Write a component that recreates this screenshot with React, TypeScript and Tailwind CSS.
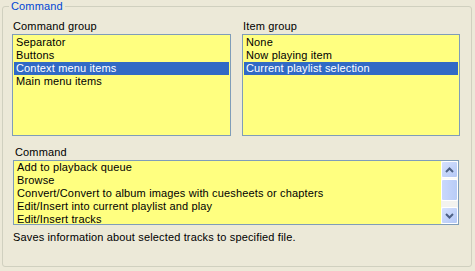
import React from "react";

const font = { fontFamily: '"Liberation Sans", Arial, sans-serif' };

function ListBox({ items, selected, className }: { items: string[]; selected?: number; className: string }) {
  return (
    <div className={`border border-[#7F9DB9] bg-[#FFFF80] p-[1px] overflow-hidden ${className}`}>
      {items.map((t, i) => (
        <div
          key={t}
          className={`h-[13px] leading-[13px] pl-[2px] whitespace-nowrap ${i === selected ? "bg-[#316AC5] text-white" : "text-black"}`}
        >
          {t}
        </div>
      ))}
    </div>
  );
}

function ScrollBtn({ up }: { up: boolean }) {
  return (
    <div className="w-[17px] h-[17px] rounded-[2px] border border-white bg-gradient-to-br from-[#D5E1FD] to-[#B4C8F6] flex items-center justify-center">
      <svg width="9" height="6" viewBox="0 0 9 6">
        <path d={up ? "M1 5 L4.5 1.5 L8 5" : "M1 1 L4.5 4.5 L8 1"} stroke="#4D6185" strokeWidth="2" fill="none" />
      </svg>
    </div>
  );
}

export default function App() {
  const cmds = [
    "Add to playback queue",
    "Browse",
    "Convert/Convert to album images with cuesheets or chapters",
    "Edit/Insert into current playlist and play",
    "Edit/Insert tracks",
  ];
  return (
    <div className="w-[475px] h-[271px] bg-[#ECE9D8] text-[11px] leading-[13px] tracking-[0.15px] text-black pt-0 pl-[2px]" style={font}>
      <fieldset className="w-[469px] h-[267px] border border-[#D0D0BF] rounded-[3px] pl-[9px] pr-[11px]">
        <legend className="ml-[-3px] px-[2px] text-[#0046D5]">Command</legend>
        <div className="flex gap-[11px] mt-[7px]">
          <div className="w-[219px] flex flex-col">
            <div className="h-[14px] pl-[1px]">Command group</div>
            <ListBox className="h-[102px]" items={["Separator", "Buttons", "Context menu items", "Main menu items"]} selected={2} />
          </div>
          <div className="w-[218px] flex flex-col">
            <div className="h-[14px] pl-[1px]">Item group</div>
            <ListBox className="h-[102px]" items={["None", "Now playing item", "Current playlist selection"]} selected={2} />
          </div>
        </div>
        <div className="ml-[1px] mt-[10px]">
          <div className="h-[14px] pl-[2px]">Command</div>
          <div className="flex border border-[#7F9DB9] bg-[#FFFF80] h-[65px] w-[446px]">
            <div className="flex-1 pl-[1px] overflow-hidden">
              {cmds.map((t) => (
                <div key={t} className="h-[13px] leading-[13px] pl-[2px] whitespace-nowrap">{t}</div>
              ))}
            </div>
            <div className="w-[17px] flex flex-col bg-[#FBFBF8]">
              <ScrollBtn up />
              <div className="h-[22px] mt-[1px] rounded-[2px] border border-white bg-gradient-to-r from-[#C9D8FC] to-[#B8CCF7]" />
              <div className="flex-1 bg-[#F3F3EF]" />
              <ScrollBtn up={false} />
            </div>
          </div>
          <div className="mt-[6px] h-[13px]">Saves information about selected tracks to specified file.</div>
        </div>
      </fieldset>
    </div>
  );
}
